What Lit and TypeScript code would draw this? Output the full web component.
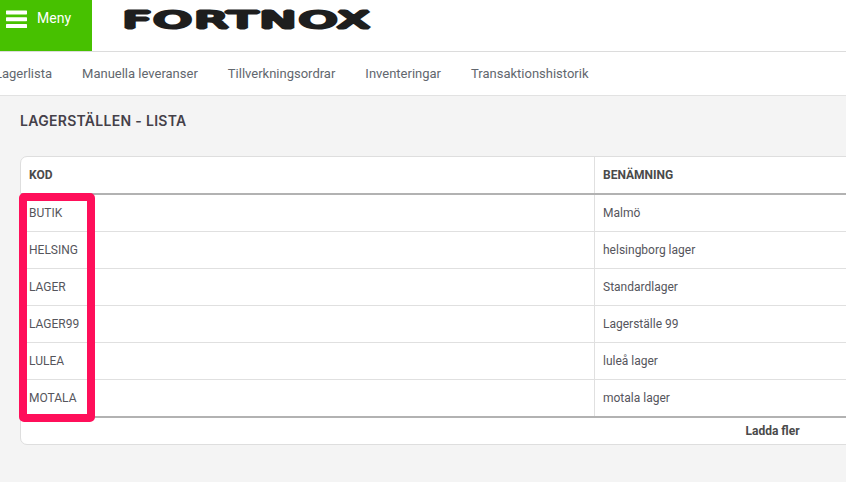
import { LitElement, html, css } from "lit";
import { customElement } from "lit/decorators.js";

const NAV = ["Lagerlista", "Manuella leveranser", "Tillverkningsordrar", "Inventeringar", "Transaktionshistorik"];
const ROWS = [
  ["BUTIK", "Malmö"],
  ["HELSING", "helsingborg lager"],
  ["LAGER", "Standardlager"],
  ["LAGER99", "Lagerställe 99"],
  ["LULEA", "luleå lager"],
  ["MOTALA", "motala lager"],
];

@customElement("app-root")
export class AppRoot extends LitElement {
  static styles = css`
    :host {
      display: block;
      width: 846px;
      height: 482px;
      overflow: hidden;
      position: relative;
      background: #f4f4f4;
      font-family: Roboto, "Liberation Sans", sans-serif;
      color: #55555c;
    }
    .top {
      display: flex;
      height: 51px;
      background: #fff;
      border-bottom: 1px solid #dcdcdc;
    }
    .menu {
      width: 92px;
      flex: none;
      background: #47c100;
      color: #fff;
      display: flex;
      align-items: flex-start;
      gap: 10px;
      padding: 10px 0 0 6px;
      box-sizing: border-box;
      font-size: 14px;
      line-height: 17px;
    }
    .burger {
      width: 21px;
      height: 18px;
      display: block;
      flex: none;
    }
    .logo {
      display: block;
      margin: 9px 0 0 32px;
      width: 246px;
      height: 21px;
      overflow: visible;
    }
    .logo text {
      font-family: "DejaVu Sans", sans-serif;
      font-weight: 400;
      font-size: 23.5px;
      letter-spacing: 1.6px;
      fill: #1e1e1e;
      stroke: #1e1e1e;
      stroke-width: 3.2px;
      stroke-linejoin: bevel;
    }
    .nav {
      display: flex;
      gap: 30px;
      height: 43px;
      align-items: center;
      background: #fff;
      border-bottom: 1px solid #e2e2e2;
      overflow: hidden;
      font-size: 13px;
      color: #62676e;
      white-space: nowrap;
    }
    .nav span:first-child {
      margin-left: -5px;
    }
    .title {
      margin: 0;
      padding: 16px 20px 0;
      height: 44px;
      font-family: Inter, sans-serif;
      font-weight: 600;
      font-size: 14px;
      letter-spacing: 0.3px;
      line-height: 17px;
      color: #444049;
    }
    .card {
      margin-left: 20px;
      width: 1505px;
      background: #fff;
      border: 1px solid #dedede;
      border-radius: 7px;
      box-sizing: border-box;
      height: 289px;
      font-size: 12px;
    }
    .row {
      display: grid;
      grid-template-columns: 573px 1fr;
      height: 37px;
      border-bottom: 1px solid #e0e0e0;
      box-sizing: border-box;
    }
    .row > div {
      padding-left: 8px;
      display: flex;
      align-items: center;
    }
    .row > div + div {
      border-left: 1px solid #e0e0e0;
    }
    .head {
      height: 38px;
      border-bottom: 2px solid #b2b2b2;
      font-weight: 700;
      color: #4a4a4a;
    }
    .row.last {
      border-bottom: 2px solid #b2b2b2;
      height: 38px;
    }
    .more {
      text-align: center;
      font-weight: 700;
      color: #4a4a4a;
      line-height: 27px;
    }
    .mark {
      position: absolute;
      left: 19px;
      top: 193px;
      width: 76px;
      height: 229px;
      box-sizing: border-box;
      border: 8px solid #ff0f5a;
      border-radius: 5px;
    }
  `;

  render() {
    return html`
      <div class="top">
        <div class="menu">
          <svg class="burger" viewBox="0 0 21 18" aria-hidden="true">
            <rect x="0" y="0.4" width="21" height="4" rx="0.6" fill="#fff"></rect>
            <rect x="0" y="7.2" width="21" height="4" rx="0.6" fill="#fff"></rect>
            <rect x="0" y="14" width="21" height="4" rx="0.6" fill="#fff"></rect>
          </svg>
          <span>Meny</span>
        </div>
        <svg class="logo" viewBox="0 0 246 21">
          <text x="-1" y="19.4" textLength="250" lengthAdjust="spacingAndGlyphs">FORTNOX</text>
        </svg>
      </div>
      <div class="nav">${NAV.map((n) => html`<span>${n}</span>`)}</div>
      <h1 class="title">LAGERSTÄLLEN - LISTA</h1>
      <div class="card">
        <div class="row head"><div>KOD</div><div>BENÄMNING</div></div>
        ${ROWS.map(
          (r, i) => html`<div class="row ${i === ROWS.length - 1 ? "last" : ""}"><div>${r[0]}</div><div>${r[1]}</div></div>`
        )}
        <div class="more">Ladda fler</div>
      </div>
      <div class="mark"></div>
    `;
  }
}
